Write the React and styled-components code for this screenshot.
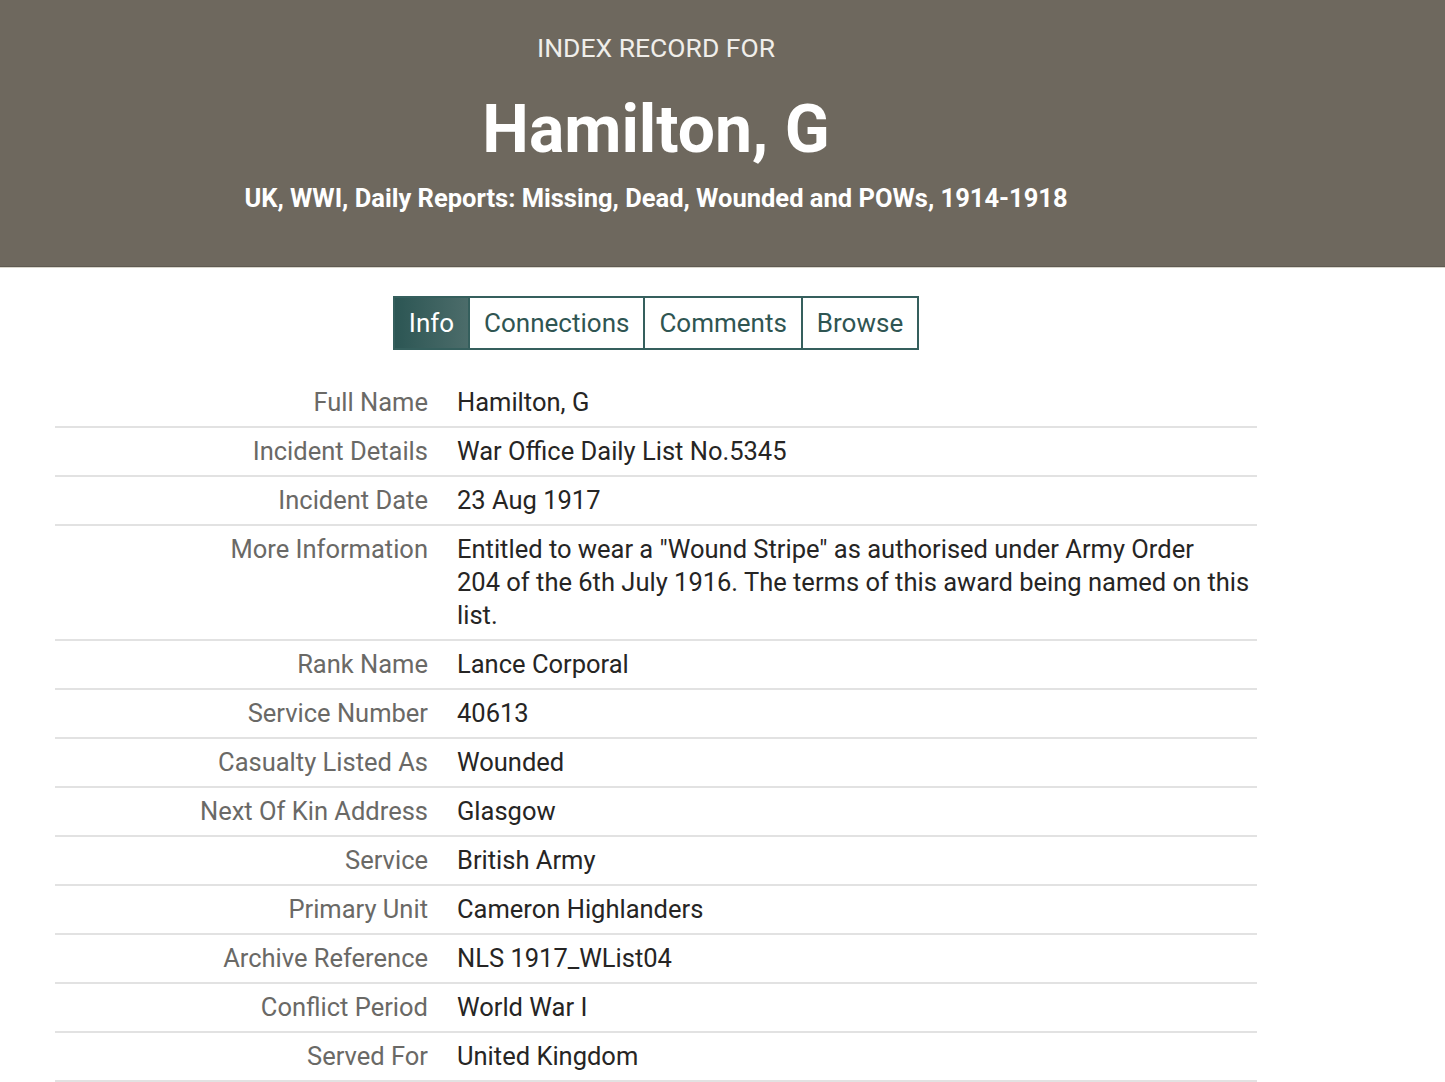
import React from 'react'
import styled, { createGlobalStyle } from 'styled-components'

const Global = createGlobalStyle`
  body {
    margin: 0;
    background: #fff;
    font-family: Roboto, "Liberation Sans", sans-serif;
  }
`

const Header = styled.header`
  background: #6e685e;
  height: 266px;
  border-bottom: 1px solid #5f5a52;
  box-shadow: 0 1px 0 #d9d6cc;
  color: #fff;
`

const HeaderInner = styled.div`
  width: 1312px;
  display: flex;
  flex-direction: column;
  align-items: center;
  padding-top: 31px;
`

const Kicker = styled.div`
  font-size: 26.5px;
  color: #f0eeea;
  line-height: 34px;
`

const Name = styled.h1`
  margin: 29px 0 0;
  font-size: 66px;
  font-weight: 700;
  line-height: 72px;
`

const Collection = styled.div`
  margin-top: 17px;
  font-size: 25.5px;
  font-weight: 700;
`

const Main = styled.main`
  width: 1312px;
  display: flex;
  flex-direction: column;
  align-items: center;
  padding-top: 29px;
`

const Tabs = styled.nav`
  display: flex;
  border: 2px solid #355f5d;
`

const Tab = styled.div`
  height: 50px;
  display: flex;
  align-items: center;
  padding: 0 14px;
  font-size: 26px;
  color: ${p => (p.active ? '#fff' : '#2f5552')};
  background: ${p => (p.active ? 'linear-gradient(90deg, #2c5654, #4c6c6a)' : '#fff')};
  & + & {
    border-left: 2px solid #355f5d;
  }
`

const Table = styled.div`
  width: 1202px;
  margin-top: 29px;
`

const Row = styled.div`
  display: grid;
  grid-template-columns: 373px 1fr;
  column-gap: 29px;
  padding: 7px 0;
  border-bottom: 2px solid #e2e2e2;
  font-size: 25.5px;
  line-height: 33px;
`

const Label = styled.div`
  text-align: right;
  color: #6a6966;
`

const Value = styled.div`
  color: #262524;
  white-space: nowrap;
`

const rows = [
  ['Full Name', ['Hamilton, G']],
  ['Incident Details', ['War Office Daily List No.5345']],
  ['Incident Date', ['23 Aug 1917']],
  ['More Information', [
    'Entitled to wear a "Wound Stripe" as authorised under Army Order',
    '204 of the 6th July 1916. The terms of this award being named on this',
    'list.',
  ]],
  ['Rank Name', ['Lance Corporal']],
  ['Service Number', ['40613']],
  ['Casualty Listed As', ['Wounded']],
  ['Next Of Kin Address', ['Glasgow']],
  ['Service', ['British Army']],
  ['Primary Unit', ['Cameron Highlanders']],
  ['Archive Reference', ['NLS 1917_WList04']],
  ['Conflict Period', ['World War I']],
  ['Served For', ['United Kingdom']],
]

export default function App() {
  return (
    <>
      <Global />
      <Header>
        <HeaderInner>
          <Kicker>INDEX RECORD FOR</Kicker>
          <Name>Hamilton, G</Name>
          <Collection>UK, WWI, Daily Reports: Missing, Dead, Wounded and POWs, 1914-1918</Collection>
        </HeaderInner>
      </Header>
      <Main>
        <Tabs>
          <Tab active>Info</Tab>
          <Tab>Connections</Tab>
          <Tab>Comments</Tab>
          <Tab>Browse</Tab>
        </Tabs>
        <Table>
          {rows.map(([label, lines]) => (
            <Row key={label}>
              <Label>{label}</Label>
              <Value>
                {lines.map((line, i) => (
                  <React.Fragment key={i}>
                    {i > 0 && <br />}
                    {line}
                  </React.Fragment>
                ))}
              </Value>
            </Row>
          ))}
        </Table>
      </Main>
    </>
  )
}
